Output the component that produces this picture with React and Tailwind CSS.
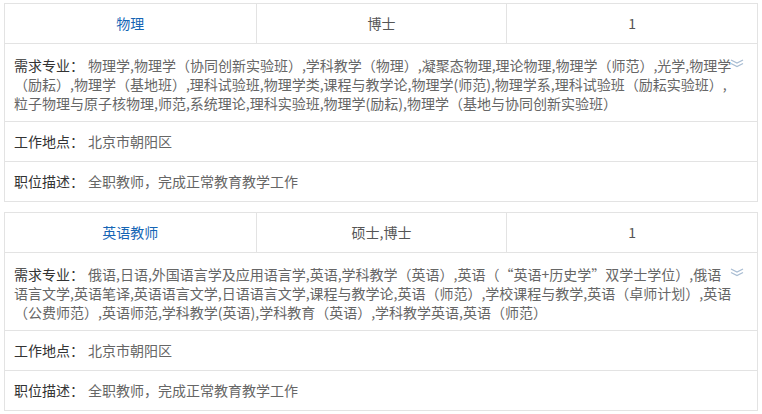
import React from "react";

const jobs = [
  {
    title: "物理",
    degree: "博士",
    count: "1",
    majors:
      "物理学,物理学（协同创新实验班）,学科教学（物理）,凝聚态物理,理论物理,物理学（师范）,光学,物理学（励耘）,物理学（基地班）,理科试验班,物理学类,课程与教学论,物理学(师范),物理学系,理科试验班（励耘实验班）,粒子物理与原子核物理,师范,系统理论,理科实验班,物理学(励耘),物理学（基地与协同创新实验班）",
    place: "北京市朝阳区",
    desc: "全职教师，完成正常教育教学工作",
  },
  {
    title: "英语教师",
    degree: "硕士,博士",
    count: "1",
    majors:
      "俄语,日语,外国语言学及应用语言学,英语,学科教学（英语）,英语（“英语+历史学”双学士学位）,俄语语言文学,英语笔译,英语语言文学,日语语言文学,课程与教学论,英语（师范）,学校课程与教学,英语（卓师计划）,英语（公费师范）,英语师范,学科教学(英语),学科教育（英语）,学科教学英语,英语（师范）",
    place: "北京市朝阳区",
    desc: "全职教师，完成正常教育教学工作",
  },
];

/* chinese quotes take a full box, like the site font does */
const withQuotes = (text) =>
  text.split(/([“”])/).map((part, i) => {
    if (part === "“") return <span key={i} className="inline-block w-[14px] text-right">{part}</span>;
    if (part === "”") return <span key={i} className="inline-block w-[14px] text-left">{part}</span>;
    return part;
  });

// little double arrow on the right of the majors row
const DoubleDown = () => (
  <svg width="14" height="9" viewBox="0 0 14 9" fill="none">
    <polyline points="1,1 7,4 13,1" stroke="#a9bdd3" strokeWidth="1.3" />
    <polyline points="1,4.5 7,7.5 13,4.5" stroke="#a9bdd3" strokeWidth="1.3" />
  </svg>
);

const JobCard = ({ job }) => {
  return (
    <div className="border border-[#e3e3e3] bg-white">
      {/* head */}
      <div className="grid grid-cols-3 h-[40px] border-b border-[#e3e3e3] text-[14px]">
        <div className="flex items-center justify-center text-[#1565b5]">{job.title}</div>
        <div className="flex items-center justify-center text-[#555] border-l border-[#e3e3e3]">{job.degree}</div>
        <div className="flex items-center justify-center text-[#555] border-l border-[#e3e3e3]">{job.count}</div>
      </div>

      {/* majors */}
      <div className="relative border-b border-[#e3e3e3] pl-[9px] pr-[22px] pt-3 pb-2 text-[14px] leading-[19px]">
        <span className="text-[#333] mr-[4px]">需求专业：</span>
        <span className="text-[#666]">{withQuotes(job.majors)}</span>
        <span className="absolute right-[13px] top-[15px]">
          <DoubleDown />
        </span>
      </div>

      {/* place */}
      <div className="flex items-center h-[40px] border-b border-[#e3e3e3] pl-[9px] text-[14px]">
        <span className="text-[#333] mr-[4px]">工作地点：</span>
        <span className="text-[#666]">{job.place}</span>
      </div>

      {/* desc */}
      <div className="flex items-center h-[39px] pl-[9px] text-[14px]">
        <span className="text-[#333] mr-[4px]">职位描述：</span>
        <span className="text-[#666]">{job.desc}</span>
      </div>
    </div>
  );
};

const App = () => {
  return (
    <div
      className="min-h-screen bg-white px-[4px] pt-[3px] flex flex-col gap-[10px]"
      style={{ fontFamily: '"Noto Sans CJK SC", "Liberation Sans", sans-serif' }}
    >
      {jobs.map((job) => (
        <JobCard key={job.title} job={job} />
      ))}
    </div>
  );
};

export default App;
